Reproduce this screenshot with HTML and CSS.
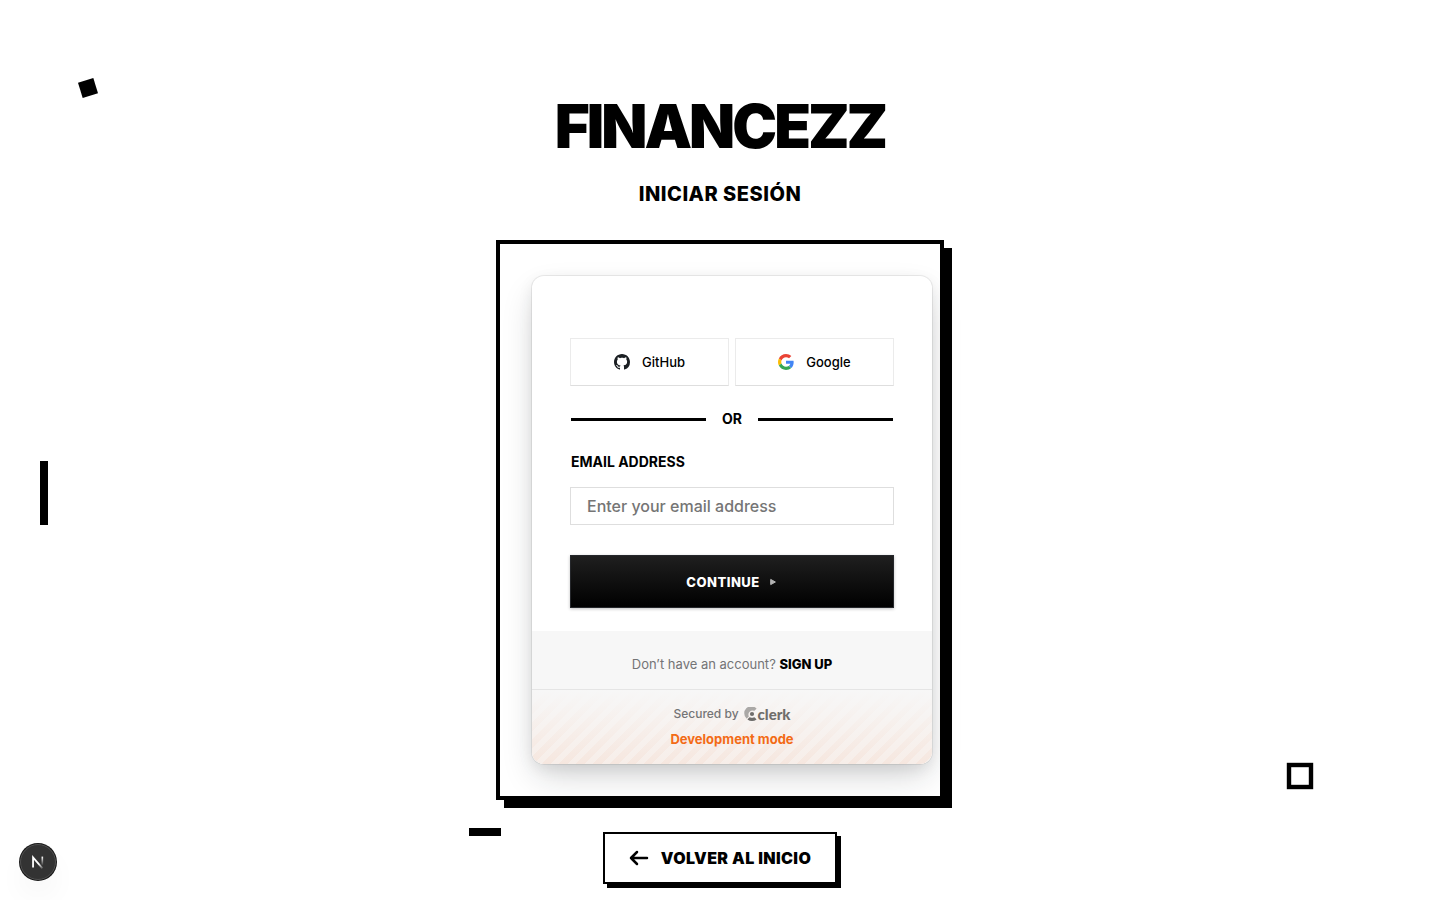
FILE: index.html
```html
<!DOCTYPE html>
<html lang="es">
<head>
<meta charset="utf-8">
<meta name="viewport" content="width=device-width, initial-scale=1">
<title>Financezz</title>
<link rel="stylesheet" href="styles.css">
</head>
<body>
<span class="deco deco-diamond"></span>
<span class="deco deco-bar"></span>
<span class="deco deco-dash"></span>
<span class="deco deco-square"></span>
<main class="page">
  <h1 class="brand">FINANCEZZ</h1>
  <h2 class="subtitle">INICIAR SESIÓN</h2>
  <section class="frame">
    <div class="card">
      <form class="form">
        <div class="social">
          <button type="button" class="social-button">
            <svg class="social-icon" viewBox="0 0 16 16" aria-hidden="true"><path fill="#1b1f23" d="M8 0C3.58 0 0 3.58 0 8c0 3.54 2.29 6.53 5.47 7.59.4.07.55-.17.55-.38 0-.19-.01-.82-.01-1.49-2.01.37-2.53-.49-2.69-.94-.09-.23-.48-.94-.82-1.13-.28-.15-.68-.52-.01-.53.63-.01 1.08.58 1.23.82.72 1.21 1.87.87 2.33.66.07-.52.28-.87.51-1.07-1.78-.2-3.64-.89-3.64-3.95 0-.87.31-1.59.82-2.15-.08-.2-.36-1.02.08-2.12 0 0 .67-.21 2.2.82.64-.18 1.32-.27 2-.27s1.36.09 2 .27c1.53-1.04 2.2-.82 2.2-.82.44 1.1.16 1.92.08 2.12.51.56.82 1.27.82 2.15 0 3.07-1.87 3.75-3.65 3.95.29.25.54.73.54 1.48 0 1.07-.01 1.93-.01 2.2 0 .21.15.46.55.38A8.01 8.01 0 0 0 16 8c0-4.42-3.58-8-8-8z"/></svg>
            <span>GitHub</span>
          </button>
          <button type="button" class="social-button">
            <svg class="social-icon" viewBox="0 0 48 48" aria-hidden="true"><path fill="#ea4335" d="M24 9.5c3.54 0 6.71 1.22 9.21 3.6l6.85-6.85C35.9 2.38 30.47 0 24 0 14.62 0 6.51 5.38 2.56 13.22l7.98 6.19C12.43 13.72 17.74 9.5 24 9.5z"/><path fill="#4285f4" d="M46.98 24.55c0-1.57-.15-3.09-.38-4.55H24v9.02h12.94c-.58 2.96-2.26 5.48-4.78 7.18l7.73 6c4.51-4.18 7.09-10.36 7.09-17.65z"/><path fill="#fbbc05" d="M10.53 28.59A14.5 14.5 0 0 1 9.77 24c0-1.6.27-3.14.76-4.59l-7.98-6.19A23.9 23.9 0 0 0 0 24c0 3.88.92 7.54 2.56 10.78z"/><path fill="#34a853" d="M24 48c6.48 0 11.93-2.13 15.89-5.81l-7.73-6C30.01 37.64 27.24 38.5 24 38.5c-6.26 0-11.57-4.22-13.47-9.91l-7.97 6.19C6.51 42.62 14.62 48 24 48z"/></svg>
            <span>Google</span>
          </button>
        </div>
        <div class="divider">OR</div>
        <label class="label" for="email">EMAIL ADDRESS</label>
        <input class="input" id="email" type="email" placeholder="Enter your email address">
        <button type="submit" class="submit">
          <span>CONTINUE</span>
          <svg class="submit-icon" viewBox="0 0 10 10" aria-hidden="true"><path fill="#b4b4b4" stroke="#b4b4b4" stroke-linejoin="round" d="M2.700 2.400v5.200L7.400 5z"/></svg>
        </button>
      </form>
      <footer class="footer">
        <p class="signup">Don’t have an account? <a class="signup-link" href="#">SIGN UP</a></p>
        <div class="secured">
          <p class="secured-line">Secured by
            <a class="clerk" href="#">
              <svg class="clerk-icon" viewBox="0 0 14 14" aria-hidden="true"><circle cx="8" cy="7" r="2.100" fill="#6f6d6b"/><path fill="#6f6d6b" d="M12.200 11.900a.5.5 0 0 1 0 .8A7 7 0 0 1 8 14a7 7 0 0 1-4.200-1.300.5.5 0 0 1 0-.8l1.500-1.500a.6.6 0 0 1 .7-.1 4.300 4.300 0 0 0 4 0 .6.6 0 0 1 .7.1z"/><path fill="#aaa8a6" d="M12.200 1.300a.5.5 0 0 1 0 .8l-1.500 1.500a.6.6 0 0 1-.7.100 4.100 4.100 0 0 0-5.300 5.300.6.6 0 0 1-.1.7l-1.500 1.500a.5.5 0 0 1-.8 0A7 7 0 0 1 12.200 1.300z"/></svg>
              <span>clerk</span>
            </a>
          </p>
          <p class="dev-mode">Development mode</p>
        </div>
      </footer>
    </div>
  </section>
  <a class="back" href="#">
    <svg class="back-icon" viewBox="0 0 20 20" fill="none" stroke="currentColor" stroke-width="2.5" stroke-linecap="round" stroke-linejoin="round" aria-hidden="true"><path d="M18 10H2M8 4l-6 6 6 6"/></svg>
    <span>VOLVER AL INICIO</span>
  </a>
</main>
<button type="button" class="dev-badge" aria-label="Open Next.js Dev Tools">
  <svg class="dev-icon" viewBox="0 0 20 20" fill="none" aria-hidden="true">
    <defs><linearGradient id="fade-a" gradientUnits="userSpaceOnUse" x1="11" y1="12" x2="16" y2="18"><stop stop-color="#fff"/><stop offset="1" stop-color="#fff" stop-opacity="0"/></linearGradient><linearGradient id="fade-b" gradientUnits="userSpaceOnUse" x1="15" y1="4" x2="15" y2="14"><stop stop-color="#fff"/><stop offset="1" stop-color="#fff" stop-opacity="0"/></linearGradient></defs>
    <path d="M4.500 16V5l10.500 12" stroke="url(#fade-a)" stroke-width="2"/><path d="M14.800 4v10" stroke="url(#fade-b)" stroke-width="1.800"/>
  </svg>
</button>
</body>
</html>
```
FILE: styles.css
```css
* { box-sizing: border-box; }

body {
  margin: 0;
  background: #fff;
  color: #000;
  font-family: Inter, "Liberation Sans", sans-serif;
}

h1, h2, p { margin: 0; }
a { color: inherit; text-decoration: none; }
button, input { font: inherit; border-radius: 0; }

.page {
  position: relative;
  display: flex;
  flex-direction: column;
  align-items: center;
  max-width: 448px;
  min-height: 100vh;
  margin: 0 auto;
  padding: 96px 0 16px;
}

.brand {
  font-size: 60px;
  line-height: 60px;
  font-weight: 900;
  letter-spacing: -3px;
}

.subtitle {
  margin: 24px 0 32px;
  font-size: 20px;
  line-height: 28px;
  font-weight: 800;
  letter-spacing: 0.5px;
}

.frame {
  width: 100%;
  padding: 32px;
  border: 4px solid #000;
  background: #fff;
  box-shadow: 8px 8px 0 #000;
}

.card {
  width: 400px;
  border-radius: 12px;
  overflow: hidden;
  background: #fff;
  box-shadow: 0 5px 15px rgba(0, 0, 0, 0.08), 0 15px 35px -5px rgba(25, 28, 33, 0.2), 0 0 0 1px rgba(0, 0, 0, 0.07);
}

.form {
  display: flex;
  flex-direction: column;
  padding: 62px 38px 23px;
}

.social { display: flex; gap: 6px; }

.social-button {
  flex: 1;
  display: flex;
  align-items: center;
  justify-content: center;
  gap: 12px;
  height: 48px;
  border: 1px solid #ebebeb;
  border-bottom-color: #dedede;
  background: #fff;
  color: #000;
  font-size: 13px;
  font-weight: 500;
}

.social-icon { width: 16px; height: 16px; }

.divider {
  display: flex;
  align-items: center;
  gap: 16px;
  margin: 24px 1px;
  font-size: 14px;
  line-height: 18px;
  font-weight: 700;
}

.divider::before, .divider::after {
  content: "";
  flex: 1;
  height: 3px;
  background: #000;
}

.label {
  margin: 0 1px 16px;
  font-size: 14px;
  line-height: 19px;
  font-weight: 700;
}

.input {
  width: 100%;
  height: 38px;
  padding: 0 16px;
  border: 1px solid #dedede;
  background: #fff;
  font-size: 16px;
  font-weight: 500;
}

.input::placeholder { color: #757575; opacity: 1; }

.submit {
  display: flex;
  align-items: center;
  justify-content: center;
  gap: 8px;
  height: 53px;
  margin-top: 30px;
  border: 1px solid #25272b;
  background: linear-gradient(#1f1f1f, #000);
  box-shadow: 0 1px 3px rgba(0, 0, 0, 0.25);
  color: #fff;
  font-size: 13px;
  font-weight: 800;
  letter-spacing: 0.5px;
}

.submit-icon { width: 10px; height: 10px; }

.footer { background: #f7f7f7; }

.signup {
  padding: 24px 0 16px;
  border-bottom: 1px solid #e5e5e5;
  color: #747476;
  font-size: 13px;
  line-height: 18px;
  text-align: center;
}

.signup-link { color: #000; font-weight: 800; }

.secured {
  display: flex;
  flex-direction: column;
  align-items: center;
  gap: 8px;
  padding: 16px 0;
  background:
    linear-gradient(#f7f7f7, rgba(247, 247, 247, 0)),
    repeating-linear-gradient(-45deg, #f7eee9 0 6px, #f6e7df 6px 12px);
}

.secured-line {
  display: flex;
  align-items: center;
  gap: 5px;
  color: #747476;
  font-size: 12px;
  line-height: 16px;
  font-weight: 500;
}

.clerk {
  display: flex;
  align-items: center;
  color: #6f6d6b;
  font-family: Lato, sans-serif;
  font-size: 15px;
  font-weight: 900;
}

.clerk-icon { width: 14px; height: 14px; }

.dev-mode {
  color: #f36b16;
  font-size: 13px;
  line-height: 18px;
  font-weight: 700;
}

.back {
  display: flex;
  align-items: center;
  gap: 12px;
  margin-top: 32px;
  padding: 12px 24px;
  border: 2px solid #000;
  background: #fff;
  box-shadow: 4px 4px 0 #000;
  font-size: 16px;
  line-height: 24px;
  font-weight: 900;
  letter-spacing: 0.4px;
}

.back-icon { width: 20px; height: 20px; }

.deco { position: absolute; background: #000; }
.deco-diamond { left: 80px; top: 80px; width: 16px; height: 16px; transform: rotate(-17deg); }
.deco-bar { left: 40px; top: 461px; width: 8px; height: 64px; }
.deco-dash { left: 469px; top: 828px; width: 32px; height: 8px; }
.deco-square { right: 128px; top: 764px; width: 24px; height: 24px; border: 4px solid #000; background: #fff; transform: scale(1.1); }

.dev-badge {
  position: fixed;
  left: 20px;
  bottom: 20px;
  display: flex;
  align-items: center;
  justify-content: center;
  width: 36px;
  height: 36px;
  padding: 0;
  border: 1px solid #505050;
  border-radius: 50%;
  background: #333;
  box-shadow: 0 0 0 1px #171717, 0 16px 32px -8px rgba(0, 0, 0, 0.12);
}

.dev-icon { width: 18px; height: 18px; }
```
